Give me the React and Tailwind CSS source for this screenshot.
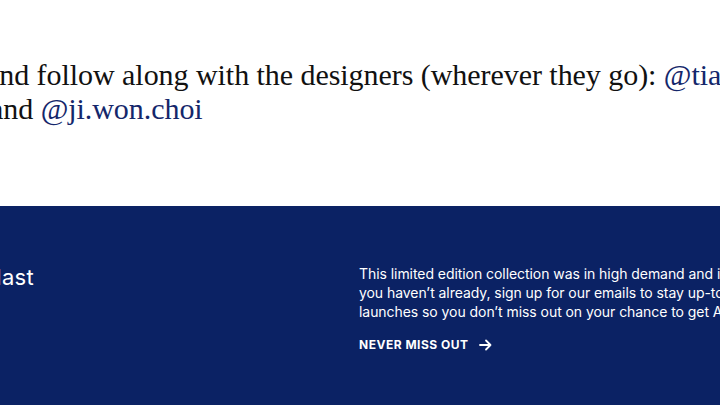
import React from "react";

export default function App() {
  return (
    <div className="w-[720px] h-[405px] overflow-hidden bg-white">
      <section className="h-[206px] pt-[58px] overflow-hidden">
        <p
          className="whitespace-nowrap text-[30px] leading-[34px] text-[#111111] tracking-[-0.05px]"
          style={{ fontFamily: '"Liberation Serif", "DejaVu Serif", serif' }}
        >
          <span className="block -ml-[14px]">
            and follow along with the designers (wherever they go):{" "}
            <a className="text-[#14276b]">@tiaadeola</a>
          </span>
          <span className="block -ml-[10px]">
            and <a className="text-[#14276b]">@ji.won.choi</a>
          </span>
        </p>
      </section>
      <section
        className="h-[199px] bg-[#0b2264] flex text-white"
        style={{ fontFamily: 'Inter, "Liberation Sans", sans-serif' }}
      >
        <div className="w-[359px] shrink-0 pt-[57px] flex">
          <div className="w-[34px] flex justify-end">
            <h2 className="whitespace-nowrap text-[22px] leading-[28px] font-normal tracking-[0.3px]">
              Built to last
            </h2>
          </div>
        </div>
        <div className="pt-[58px] flex-1 min-w-0">
          <p className="whitespace-nowrap text-[14px] leading-[19px] tracking-[-0.06px]">
            <span className="block">This limited edition collection was in high demand and is now sold out. If</span>
            <span className="block">you haven’t already, sign up for our emails to stay up-to-date on new</span>
            <span className="block">launches so you don’t miss out on your chance to get Away.</span>
          </p>
          <a className="mt-[15px] flex items-center gap-[10px] text-[12px] font-bold tracking-[0.5px] uppercase">
            Never miss out
            <svg width="13" height="12" viewBox="0 0 13 12" fill="none" stroke="white" strokeWidth="1.8" strokeLinecap="round" strokeLinejoin="round">
              <path d="M1 6h10.5M7 1.5L11.5 6 7 10.5" />
            </svg>
          </a>
        </div>
      </section>
    </div>
  );
}
